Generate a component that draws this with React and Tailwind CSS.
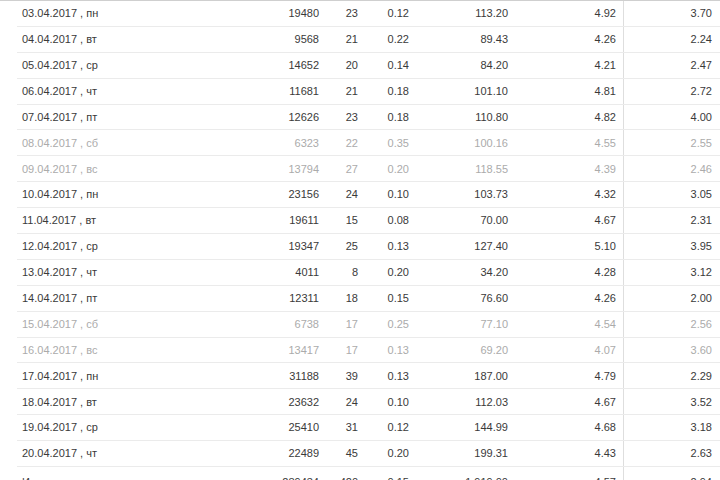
import React from 'react';

const rows = [
  ['03.04.2017', 'пн', '19480', '23', '0.12', '113.20', '4.92', '3.70'],
  ['04.04.2017', 'вт', '9568', '21', '0.22', '89.43', '4.26', '2.24'],
  ['05.04.2017', 'ср', '14652', '20', '0.14', '84.20', '4.21', '2.47'],
  ['06.04.2017', 'чт', '11681', '21', '0.18', '101.10', '4.81', '2.72'],
  ['07.04.2017', 'пт', '12626', '23', '0.18', '110.80', '4.82', '4.00'],
  ['08.04.2017', 'сб', '6323', '22', '0.35', '100.16', '4.55', '2.55', true],
  ['09.04.2017', 'вс', '13794', '27', '0.20', '118.55', '4.39', '2.46', true],
  ['10.04.2017', 'пн', '23156', '24', '0.10', '103.73', '4.32', '3.05'],
  ['11.04.2017', 'вт', '19611', '15', '0.08', '70.00', '4.67', '2.31'],
  ['12.04.2017', 'ср', '19347', '25', '0.13', '127.40', '5.10', '3.95'],
  ['13.04.2017', 'чт', '4011', '8', '0.20', '34.20', '4.28', '3.12'],
  ['14.04.2017', 'пт', '12311', '18', '0.15', '76.60', '4.26', '2.00'],
  ['15.04.2017', 'сб', '6738', '17', '0.25', '77.10', '4.54', '2.56', true],
  ['16.04.2017', 'вс', '13417', '17', '0.13', '69.20', '4.07', '3.60', true],
  ['17.04.2017', 'пн', '31188', '39', '0.13', '187.00', '4.79', '2.29'],
  ['18.04.2017', 'вт', '23632', '24', '0.10', '112.03', '4.67', '3.52'],
  ['19.04.2017', 'ср', '25410', '31', '0.12', '144.99', '4.68', '3.18'],
  ['20.04.2017', 'чт', '22489', '45', '0.20', '199.31', '4.43', '2.63'],
];

const Row = ({ label, cells, muted, total }) => (
  <div
    className={`flex items-center border-b border-[#ebebeb] ${
      total ? 'h-[32px]' : 'h-[25.9px]'
    } ${muted ? 'text-[#ababab]' : 'text-[#3a3a3a]'}`}
  >
    <div className="w-[223px] pl-[5px] whitespace-pre">{label}</div>
    <div className="w-[84px] pr-[5px] text-right">{cells[0]}</div>
    <div className="w-[39px] pr-[5px] text-right">{cells[1]}</div>
    <div className="w-[51px] pr-[5px] text-right">{cells[2]}</div>
    <div className="w-[99px] pr-[5px] text-right">{cells[3]}</div>
    <div className="flex h-full w-[111px] items-center justify-end border-r border-[#dedede] pr-[7px]">{cells[4]}</div>
    <div className="w-[93px] pr-[5px] text-right">{cells[5]}</div>
    <div className="flex-1" />
  </div>
);

export default function App() {
  return (
    <div className="h-[480px] w-[720px] overflow-hidden bg-white text-[11px] font-['Liberation_Sans',Arial,sans-serif]">
      <div className="h-px bg-[#cfcfcf]" />
      <div className="ml-[17px]">
        {rows.map((r) => (
          <Row key={r[0]} label={`${r[0]} , ${r[1]}`} cells={r.slice(2, 8)} muted={r[8]} />
        ))}
        <Row total label="Итого" cells={['289434', '420', '0.15', '1 919.00', '4.57', '2.94']} />
      </div>
    </div>
  );
}
